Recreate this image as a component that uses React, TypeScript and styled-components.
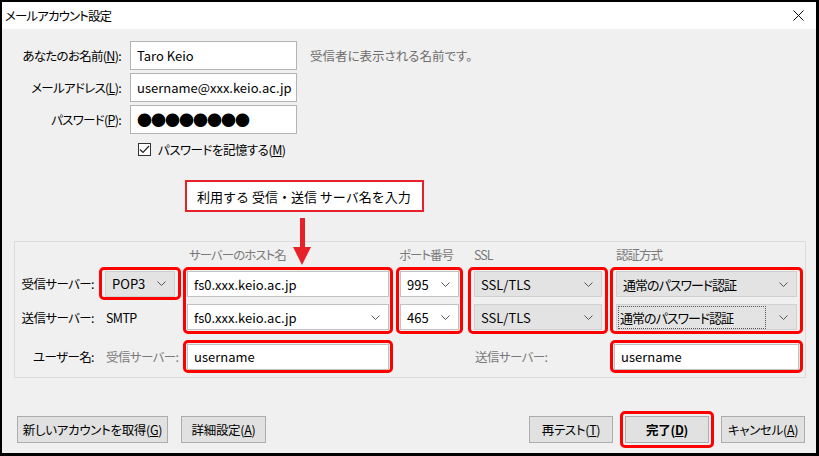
import React from 'react';
import styled, { createGlobalStyle } from 'styled-components';

const GlobalStyle = createGlobalStyle`
  html, body {
    margin: 0;
    padding: 0;
    background: #000;
  }
  body {
    font-family: "Noto Sans CJK JP", "Noto Sans", sans-serif;
    font-feature-settings: "palt";
    color: #000;
  }
  * { box-sizing: border-box; }
`;

const Window = styled.div`
  width: 819px;
  height: 456px;
  border-style: solid;
  border-color: #000;
  border-width: 2px 3px 3px 2px;
  background: #f0f0f0;
  display: flex;
  flex-direction: column;
  overflow: hidden;
`;

const TitleBar = styled.div`
  height: 27px;
  background: #fff;
  display: flex;
  align-items: center;
  justify-content: space-between;
  padding: 0 12px 0 3px;
  font-size: 12.5px;
  letter-spacing: -0.9px;
  flex-shrink: 0;
`;

const Body = styled.div`
  flex: 1;
  display: flex;
  flex-direction: column;
  padding-top: 12px;
`;

const FormGrid = styled.div`
  display: grid;
  grid-template-columns: 119px 167px auto;
  column-gap: 9px;
  row-gap: 3px;
  align-items: center;
`;

const Label = styled.label`
  font-size: 12.5px;
  letter-spacing: -0.7px;
  text-align: right;
  white-space: nowrap;
`;

const TextBox = styled.div<{ $big?: boolean }>`
  height: 29px;
  background: #fff;
  border: 1px solid #b4b4b4;
  display: flex;
  align-items: center;
  padding-left: 6px;
  font-size: ${p => (p.$big ? '15px' : '13px')};
  letter-spacing: ${p => (p.$big ? '-1px' : '0')};
  white-space: nowrap;
  overflow: hidden;
`;

const Hint = styled.span`
  font-size: 12.5px;
  color: #6d6d6d;
  margin-left: 4px;
`;

const CheckRow = styled.div`
  display: flex;
  align-items: center;
  gap: 7px;
  margin: 6px 0 0 136px;
  height: 18px;
  font-size: 12.5px;
  letter-spacing: -0.5px;
`;

const CheckBox = styled.span`
  width: 13px;
  height: 13px;
  border: 1px solid #333;
  background: #fff;
  display: flex;
  align-items: center;
  justify-content: center;
`;

const AnnotationArea = styled.div`
  margin: 22px 0 29px 183px;
  height: 32px;
`;

const Callout = styled.div`
  position: relative;
  width: 239px;
  height: 32px;
  background: #fff;
  border: 2px solid #e8202a;
  display: flex;
  align-items: center;
  padding-left: 10px;
  font-size: 13px;
  font-feature-settings: normal;
  white-space: nowrap;
`;

const Arrow = styled.svg`
  position: absolute;
  left: 105px;
  top: 36px;
  z-index: 2;
`;

const GroupBox = styled.div`
  margin: 0 10px 0 12px;
  border: 1px solid #dcdcdc;
  padding: 0 0 4px 1px;
  display: grid;
  grid-template-columns: 83px 84px 213px 72px 142px 193px;
  grid-template-rows: 25px 33px 34px 39px;
`;

const ColHead = styled.div<{ $col: number }>`
  grid-column: ${p => p.$col};
  grid-row: 1;
  align-self: end;
  padding: 0 0 3px ${p => (p.$col === 4 ? 3 : 6)}px;
  font-size: 12.5px;
  letter-spacing: -1px;
  color: #7a7a7a;
  white-space: nowrap;
`;

const RowLabel = styled.div<{ $row: number; $col?: number; $muted?: boolean }>`
  grid-column: ${p => p.$col ?? 1};
  grid-row: ${p => p.$row};
  align-self: ${p => (p.$row === 4 ? 'end' : 'center')};
  height: ${p => (p.$row === 4 ? '33px' : 'auto')};
  display: flex;
  align-items: center;
  justify-content: ${p => (p.$col ? 'flex-start' : 'flex-end')};
  padding: ${p => (p.$col ? '0 0 0 7px' : '0 5px 0 0')};
  font-size: 12.5px;
  letter-spacing: -0.6px;
  color: ${p => (p.$muted ? '#7a7a7a' : '#000')};
  white-space: nowrap;
`;

const Highlight = styled.div<{ $col: number; $row: string; $w: number }>`
  grid-column: ${p => p.$col};
  grid-row: ${p => p.$row};
  align-self: ${p => (p.$row === '4' ? 'end' : 'start')};
  width: ${p => p.$w}px;
  border: 3px solid #f00;
  border-radius: 5px;
  padding: 0 1px;
  display: flex;
  flex-direction: column;
  gap: 7px;
  height: ${p => (p.$row === '4' ? '33px' : p.$row === '2' ? '33px' : '67px')};
  justify-content: ${p => (p.$row === '2 / span 2' ? 'flex-start' : 'center')};
  padding-top: ${p => (p.$row === '2 / span 2' ? '1px' : '0')};
`;

const Field = styled.div<{ $kind: 'text' | 'combo' | 'select'; $jp?: boolean }>`
  height: 26px;
  display: flex;
  align-items: center;
  justify-content: space-between;
  padding: 0 8px 0 6px;
  font-size: 13px;
  letter-spacing: ${p => (p.$jp ? '-1px' : '0')};
  white-space: nowrap;
  background: ${p => (p.$kind === 'select' ? '#e3e3e3' : '#fff')};
  border: 1px solid ${p => (p.$kind === 'select' ? '#d0d0d0' : '#c2c2c2')};
  margin: ${p => (p.$kind === 'select' ? '0 2px' : '0')};
`;

const Focused = styled.span`
  flex: 1;
  outline: 1px dotted #555;
  padding: 1px 1px;
  margin: 0 14px 0 -4px;
`;

const ButtonRow = styled.div`
  display: flex;
  align-items: center;
  margin-top: 38px;
  padding: 0 11px 0 15px;
  gap: 13px;
`;

const Spacer = styled.div`
  flex: 1;
`;

const MarkRing = styled.span`
  display: inline-flex;
  padding: 2px;
  margin: -5px;
  border: 3px solid #f00;
  border-radius: 5px;
`;

const Button = styled.button<{ $w: number; $bold?: boolean }>`
  width: ${p => p.$w}px;
  height: 27px;
  background: #e1e1e1;
  border: 1px solid #adadad;
  font-family: inherit;
  font-feature-settings: "palt";
  font-size: 12.5px;
  letter-spacing: -0.3px;
  white-space: nowrap;
  color: #000;
  padding: 0;
  font-weight: ${p => (p.$bold ? 700 : 400)};
  border-radius: 0;
`;

const RightButtons = styled.div`
  display: flex;
  gap: 12px;
`;

const Chevron = () => (
  <svg width="9" height="5" viewBox="0 0 9 5" style={{ flexShrink: 0 }}>
    <path d="M0.5 0.5 L4.5 4.5 L8.5 0.5" fill="none" stroke="#555" strokeWidth="1" />
  </svg>
);

const u = (s: string) => <u>{s}</u>;

export default function App() {
  return (
    <>
      <GlobalStyle />
      <Window>
        <TitleBar>
          <span>メールアカウント設定</span>
          <svg width="11" height="11" viewBox="0 0 11 11">
            <path d="M0.5 0.5 L10.5 10.5 M10.5 0.5 L0.5 10.5" stroke="#111" strokeWidth="1" />
          </svg>
        </TitleBar>
        <Body>
          <FormGrid>
            <Label>あなたのお名前({u('N')}):</Label>
            <TextBox>Taro Keio</TextBox>
            <Hint>受信者に表示される名前です。</Hint>
            <Label>メールアドレス({u('L')}):</Label>
            <TextBox>username@xxx.keio.ac.jp</TextBox>
            <span />
            <Label>パスワード({u('P')}):</Label>
            <TextBox $big>●●●●●●●●</TextBox>
            <span />
          </FormGrid>
          <CheckRow>
            <CheckBox>
              <svg width="11" height="9" viewBox="0 0 11 9">
                <path d="M1 4.5 L4 7.5 L10 1" fill="none" stroke="#222" strokeWidth="1.2" />
              </svg>
            </CheckBox>
            <span>パスワードを記憶する({u('M')})</span>
          </CheckRow>

          <AnnotationArea>
            <Callout>
              利用する 受信・送信 サーバ名を入力
              <Arrow width="20" height="48" viewBox="0 0 20 48">
                <rect x="8" y="0" width="5" height="30" fill="#e8202a" />
                <path d="M1 29 L19 29 L10 47 Z" fill="#e8202a" />
              </Arrow>
            </Callout>
          </AnnotationArea>

          <GroupBox>
            <ColHead $col={3}>サーバーのホスト名</ColHead>
            <ColHead $col={4}>ポート番号</ColHead>
            <ColHead $col={5}>SSL</ColHead>
            <ColHead $col={6}>認証方式</ColHead>

            <RowLabel $row={2}>受信サーバー:</RowLabel>
            <RowLabel $row={3}>送信サーバー:</RowLabel>
            <RowLabel $row={4}>ユーザー名:</RowLabel>

            <Highlight $col={2} $row="2" $w={82}>
              <Field $kind="select">
                POP3 <Chevron />
              </Field>
            </Highlight>
            <RowLabel $row={3} $col={2}>SMTP</RowLabel>
            <RowLabel $row={4} $col={2} $muted>受信サーバー:</RowLabel>

            <Highlight $col={3} $row="2 / span 2" $w={210}>
              <Field $kind="text">fs0.xxx.keio.ac.jp</Field>
              <Field $kind="combo">
                fs0.xxx.keio.ac.jp <Chevron />
              </Field>
            </Highlight>
            <Highlight $col={3} $row="4" $w={210}>
              <Field $kind="text">username</Field>
            </Highlight>

            <Highlight $col={4} $row="2 / span 2" $w={67}>
              <Field $kind="combo">
                995 <Chevron />
              </Field>
              <Field $kind="combo">
                465 <Chevron />
              </Field>
            </Highlight>

            <Highlight $col={5} $row="2 / span 2" $w={140}>
              <Field $kind="select">
                SSL/TLS <Chevron />
              </Field>
              <Field $kind="select">
                SSL/TLS <Chevron />
              </Field>
            </Highlight>
            <RowLabel $row={4} $col={5} $muted>送信サーバー:</RowLabel>

            <Highlight $col={6} $row="2 / span 2" $w={193}>
              <Field $kind="select" $jp>
                通常のパスワード認証 <Chevron />
              </Field>
              <Field $kind="select" $jp>
                <Focused>通常のパスワード認証</Focused>
                <Chevron />
              </Field>
            </Highlight>
            <Highlight $col={6} $row="4" $w={193}>
              <Field $kind="text">username</Field>
            </Highlight>
          </GroupBox>

          <ButtonRow>
            <Button $w={151}>新しいアカウントを取得({u('G')})</Button>
            <Button $w={85}>詳細設定({u('A')})</Button>
            <Spacer />
            <RightButtons>
              <Button $w={84}>再テスト({u('T')})</Button>
              <MarkRing>
                <Button $w={84} $bold>完了({u('D')})</Button>
              </MarkRing>
              <Button $w={84}>キャンセル({u('A')})</Button>
            </RightButtons>
          </ButtonRow>
        </Body>
      </Window>
    </>
  );
}
